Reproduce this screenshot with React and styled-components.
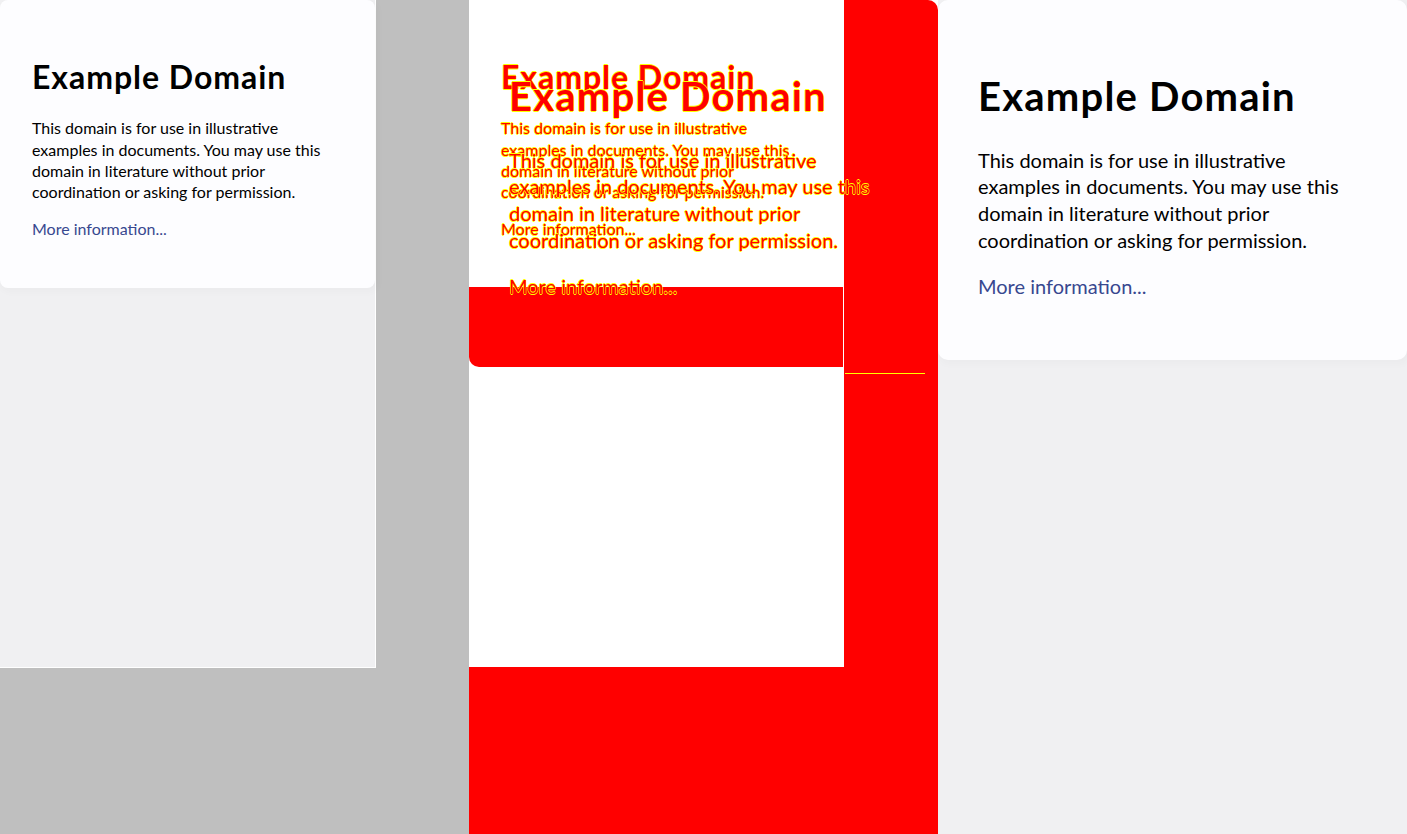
import React from "react";
import styled, { createGlobalStyle, css } from "styled-components";

const GlobalStyle = createGlobalStyle`
  html, body {
    margin: 0;
    padding: 0;
    background: #ffffff;
  }
  body {
    font-family: Lato, "Open Sans", sans-serif;
    line-height: 1.33;
  }
`;

const Page = styled.div`
  display: flex;
  width: 1407px;
  height: 834px;
  overflow: hidden;
`;

const Pane = styled.div`
  flex: none;
  width: 469px;
  height: 834px;
  position: relative;
  overflow: hidden;
  background: ${(p) => p.$bg};
  ${(p) =>
    p.$corner &&
    css`
      border-top-right-radius: 10px;
    `}
`;

const Viewport = styled.div`
  width: 375px;
  height: 667px;
  background: #f0f0f2;
  border-right: 1px solid #ffffff;
  border-bottom: 1px solid #ffffff;
`;

const Card = styled.div`
  font-size: ${(p) => p.$size}px;
  padding: 2em;
  background: #fdfdff;
  border-radius: 0.5em;
  box-shadow: 2px 3px 7px 2px rgba(0, 0, 0, 0.02);
  color: #000;
`;

const Title = styled.h1`
  font-size: 2em;
  font-weight: 700;
  letter-spacing: 0.03em;
  margin: 0.74em 0 0.6em;
`;

const Text = styled.p`
  margin: 1em 0;
`;

const Link = styled.a`
  color: #38488f;
  text-decoration: none;
`;

/* diff pane */
const DiffViewport = styled.div`
  width: 375px;
  height: 667px;
  background: #ffffff;
  display: flex;
  flex-direction: column;
`;

const Same = styled.div`
  height: 287px;
  flex: none;
`;

const Band = styled.div`
  height: 80px;
  flex: none;
  background: #ff0000;
  border-bottom-left-radius: 10px;
  border-right: 1px solid #ffffff;
`;

const Overlay = styled.div`
  position: absolute;
  inset: 0;
`;

const GhostCard = styled.div`
  position: absolute;
  top: 0;
  left: 0;
  width: ${(p) => p.$width}px;
  box-sizing: border-box;
  font-size: ${(p) => p.$size}px;
  padding: 2em;
  color: #ff0000;
  text-shadow: 0.6px 0 #ffff00, -0.6px 0 #ffff00, 0 0.6px #ffff00, 0 -0.6px #ffff00;

  a {
    color: #ff0000;
  }
`;

const Edge = styled.div`
  position: absolute;
  left: 376px;
  top: 373px;
  width: 80px;
  height: 1px;
  background: #ffff00;
`;

const Content = () => (
  <>
    <Title>Example Domain</Title>
    <Text>
      This domain is for use in illustrative examples in documents. You may use this domain in
      literature without prior coordination or asking for permission.
    </Text>
    <Text>
      <Link href="#">More information...</Link>
    </Text>
  </>
);

export default function App() {
  return (
    <Page>
      <GlobalStyle />
      <Pane $bg="#bfbfbf">
        <Viewport>
          <Card $size={16}>
            <Content />
          </Card>
        </Viewport>
      </Pane>

      <Pane $bg="#ff0000" $corner>
        <DiffViewport>
          <Same />
          <Band />
        </DiffViewport>
        <Overlay>
          <GhostCard $size={16} $width={375}>
            <Content />
          </GhostCard>
          <GhostCard $size={20} $width={469}>
            <Content />
          </GhostCard>
          <Edge />
        </Overlay>
      </Pane>

      <Pane $bg="#f0f0f2">
        <Card $size={20}>
          <Content />
        </Card>
      </Pane>
    </Page>
  );
}
